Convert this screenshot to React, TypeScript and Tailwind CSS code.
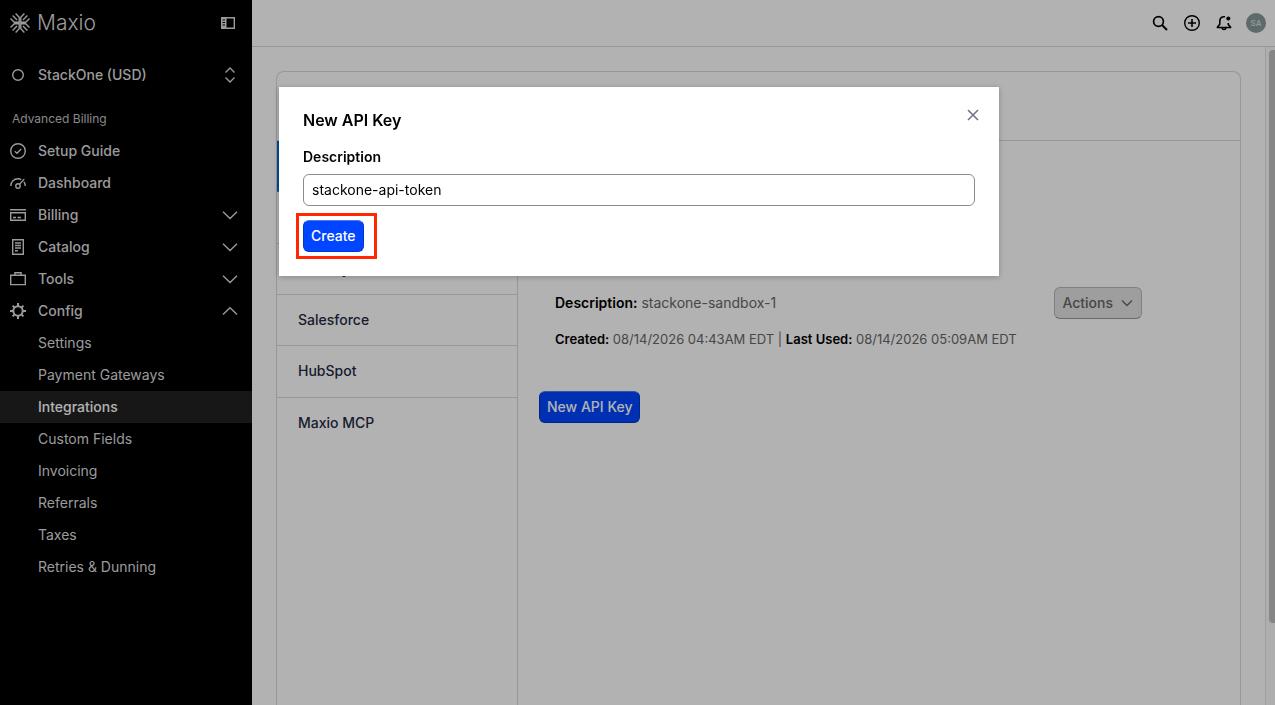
import type { ReactNode } from "react";

const line = { fill: "none", stroke: "currentColor" } as const;

function Icon({ size = 16, children }: { size?: number; children: ReactNode }) {
  return (
    <svg width={size} height={size} viewBox={`0 0 ${size} ${size}`} {...line} strokeWidth="1.4" aria-hidden="true" className="shrink-0">
      {children}
    </svg>
  );
}

const icons = {
  setup: (
    <Icon>
      <circle cx="8" cy="8" r="7.3" />
      <path d="M4.8 8.2 7 10.3l4.2-4.2" />
    </Icon>
  ),
  dashboard: (
    <Icon>
      <path d="M.8 11C.8 6.6 4 3.8 8 3.8c1.3 0 2.4.3 3.3.8M14 6.8c.8 1.2 1.2 2.6 1.2 4.2M9.4 9.4l4.8-5.2" />
      <circle cx="8" cy="11" r="2.2" />
    </Icon>
  ),
  billing: (
    <Icon>
      <path d="M0 2.7h16M.7 5.7h14.6v7.6H.7zM3 10.5h3M7.5 10.5h3.5" />
    </Icon>
  ),
  catalog: (
    <Icon>
      <path d="M2.7.7h10.6v14.6H2.7zM5 4h6M5 6.5h6M5 9h6M5 11.8h3" />
    </Icon>
  ),
  tools: (
    <Icon>
      <path d="M.7 4.2h14.6v9.4H.7zM4.9 4V1.7h6.2V4" />
    </Icon>
  ),
  config: (
    <Icon>
      <circle cx="8" cy="8" r="4.7" strokeWidth="2" />
      <path strokeWidth="2" d="M8 0v3M8 13v3M0 8h3M13 8h3M2.6 2.6l2 2M11.4 11.4l2 2M13.4 2.6l-2 2M4.6 11.4l-2 2" />
    </Icon>
  ),
};

function Chevron({ up = false }: { up?: boolean }) {
  return (
    <Icon>
      <path d={up ? "M1 11.5 8 4.7l7 6.8" : "M1 4.7l7 6.8 7-6.8"} />
    </Icon>
  );
}

const sections = [
  { label: "Setup Guide", icon: icons.setup },
  { label: "Dashboard", icon: icons.dashboard },
  { label: "Billing", icon: icons.billing, menu: true },
  { label: "Catalog", icon: icons.catalog, menu: true },
  { label: "Tools", icon: icons.tools, menu: true },
  { label: "Config", icon: icons.config, menu: true, open: true },
];

const configItems = [
  "Settings",
  "Payment Gateways",
  "Integrations",
  "Custom Fields",
  "Invoicing",
  "Referrals",
  "Taxes",
  "Retries & Dunning",
];

const integrations = ["", "", "API Keys", "Salesforce", "HubSpot", "Maxio MCP"];

const logoAngles = [0, 90, 180, 270];

function Sidebar() {
  return (
    <aside className="flex w-[252px] shrink-0 flex-col bg-black text-[#dedede]">
      <div className="flex h-[46px] items-center justify-between pl-[10px] pr-4">
        <div className="flex items-center gap-[7px]">
          <svg width="20" height="20" viewBox="0 0 20 20" {...line} strokeWidth="1.4" aria-hidden="true">
            {logoAngles.map((angle) => (
              <path key={angle} transform={`rotate(${angle} 10 10)`} d="M5.600.5 9.200 4.300V9.200H4.300L.5 5.600M2.600 2.600 7 7" />
            ))}
          </svg>
          <span className="text-[21px] font-light leading-6">Maxio</span>
        </div>
        <button aria-label="Collapse sidebar">
          <Icon>
            <path d="M1.7 2.7h12.6v10.6H1.7z" />
            <path d="M1 2h5.5v12H1z" fill="currentColor" stroke="none" />
            <path d="M2.5 5h2.5M2.5 7.5h2.5M2.5 10h2.5" stroke="black" strokeWidth="1" />
          </Icon>
        </button>
      </div>
      <button className="mt-[13px] flex h-8 items-center pl-[10px] pr-[14px] text-left text-sm font-medium">
        <Icon>
          <circle cx="8" cy="8" r="5.3" />
        </Icon>
        <span className="ml-3 flex-1">StackOne (USD)</span>
        <Icon>
          <path d="M3.5 5.5 8 1l4.5 4.5M3.5 10.5 8 15l4.5-4.5" />
        </Icon>
      </button>
      <h2 className="mt-[18px] pl-3 text-xs leading-5 text-[#c4c4c4]">Advanced Billing</h2>
      <nav className="mt-[6px]">
        {sections.map((s) => (
          <a key={s.label} href="#" className="flex h-8 items-center pl-[10px] pr-[14px] text-sm font-medium">
            {s.icon}
            <span className="ml-3 flex-1">{s.label}</span>
            {s.menu && <Chevron up={s.open} />}
          </a>
        ))}
        {configItems.map((label) => (
          <a
            key={label}
            href="#"
            className={
              label === "Integrations"
                ? "flex h-8 items-center bg-[#222222] pl-[38px] text-sm font-medium text-white"
                : "flex h-8 items-center pl-[38px] text-sm"
            }
          >
            {label}
          </a>
        ))}
      </nav>
    </aside>
  );
}

function TopBar() {
  return (
    <header className="flex h-[47px] shrink-0 items-center justify-end gap-4 border-b border-[#d8d8d8] pr-[9px] text-black">
      <button aria-label="Search">
        <Icon>
          <circle cx="6.5" cy="6.5" r="4.9" strokeWidth="1.7" />
          <path d="m10 10 5 5" strokeWidth="1.9" />
        </Icon>
      </button>
      <button aria-label="Add">
        <Icon>
          <circle cx="8" cy="8" r="7.3" />
          <path d="M8 4v8M4 8h8" strokeWidth="1.6" />
        </Icon>
      </button>
      <button aria-label="Notifications">
        <Icon>
          <path d="M9 1.8c-3.2-.5-5.2 1.4-5.2 4.5v3L1.5 12v.5h13V12l-2.2-2.5V8M6 13c.3 2 3.700 2 4 0" strokeWidth="1.6" />
          <circle cx="12.300" cy="3.500" r="2" fill="currentColor" stroke="none" />
        </Icon>
      </button>
      <button className="-ml-[2px] size-5 rounded-full bg-[#879999] text-[8px] font-medium text-[#dedede]">SA</button>
    </header>
  );
}

function IntegrationCard() {
  return (
    <section className="flex flex-1 flex-col rounded-t-lg border border-b-0 border-[#d8d8d8]">
      <div className="h-[69px] border-b border-[#d8d8d8]" />
      <div className="flex flex-1">
        <div className="w-[241px] shrink-0 border-r border-[#d8d8d8]">
          <nav className="grid h-[308px] grid-rows-6 text-sm font-medium text-[#1f2a44]">
            {integrations.map((label, i) => (
              <a
                key={i}
                href="#"
                className="flex items-center border-b border-[#d8d8d8] pl-[21px] first:border-l-3 first:border-l-[#0069d9] last:border-b-0"
              >
                {label}
              </a>
            ))}
          </nav>
        </div>
        <div className="flex-1 pl-[21px] pr-[98px] pt-[146px] text-sm text-[#666666]">
          <div className="flex h-8 items-center justify-between pl-4">
            <p>
              <strong className="font-semibold text-black">Description:</strong> stackone-sandbox-1
            </p>
            <button className="flex h-8 items-center gap-2 rounded-md border border-[#b8b8b8] border-b-[#999999] bg-[#e3e3e3] px-[7px] font-medium">
              Actions
              <svg width="13" height="12" viewBox="0 0 13 12" {...line} strokeWidth="1.4" aria-hidden="true">
                <path d="m1 3.500 5 5 5-5" />
              </svg>
            </button>
          </div>
          <p className="mt-[10px] pl-4 text-[13px] leading-5">
            <strong className="font-semibold text-black">Created:</strong> 08/14/2026 04:43AM EDT |{" "}
            <strong className="font-semibold text-black">Last Used:</strong> 08/14/2026 05:09AM EDT
          </p>
          <button className="mt-[42px] h-8 rounded-md border border-[#0037cc] border-t-[#4c79ee] bg-[#0045ff] px-[7px] font-medium text-white">
            New API Key
          </button>
        </div>
      </div>
    </section>
  );
}

function NewKeyDialog() {
  return (
    <div className="fixed inset-0 flex items-start justify-center bg-black/30 pl-[3px] pt-[87px]">
      <div
        role="dialog"
        aria-labelledby="dialog-title"
        className="relative w-full max-w-[720px] bg-white px-6 pb-6 pt-5 text-sm text-black shadow-[0_1px_6px_rgba(0,0,0,0.25)]"
      >
        <h1 id="dialog-title" className="text-base font-semibold leading-[26px]">
          New API Key
        </h1>
        <button aria-label="Close" className="absolute right-[18px] top-5 text-[#6b7280]">
          <Icon>
            <path d="m3 3 10 10M13 3 3 13" strokeWidth="1.5" />
          </Icon>
        </button>
        <label htmlFor="description" className="mt-[14px] block font-semibold leading-5">
          Description
        </label>
        <input
          id="description"
          defaultValue="stackone-api-token"
          className="mt-[7px] block h-8 w-full rounded-md border border-[#8c8c8c] px-2 pb-[2px] outline-none"
        />
        <div className="relative mt-[14px] w-fit">
          <button className="block h-8 rounded-md border border-[#0037cc] border-t-[#4c79ee] bg-[#0045ff] px-[7px] font-medium text-white">
            Create
          </button>
          <span className="pointer-events-none absolute -bottom-[7px] -left-[7px] -right-[13px] -top-[7px] border-3 border-[#ff2600]" />
        </div>
      </div>
    </div>
  );
}

export default function App() {
  return (
    <div className="flex min-h-screen bg-white font-['Inter',sans-serif]">
      <Sidebar />
      <div className="flex min-w-0 flex-1 flex-col">
        <TopBar />
        <div className="flex flex-1">
          <main className="flex flex-1 flex-col px-6 pt-6">
            <IntegrationCard />
          </main>
          <div className="w-[10px] border-l border-[#e4e4e4] bg-[#fafafa] pl-[3px] pt-[3px]">
            <div className="h-[573px] rounded-l-sm bg-[#c1c1c1]" />
          </div>
        </div>
      </div>
      <NewKeyDialog />
    </div>
  );
}
